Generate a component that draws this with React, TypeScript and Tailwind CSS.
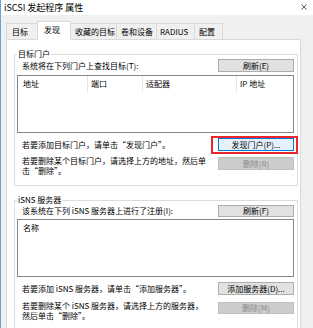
import React from "react";

const Btn = ({ children, kind = "normal", w = "w-[76px]", h = "h-[13px]" }: { children: React.ReactNode; kind?: "normal" | "focus" | "disabled"; w?: string; h?: string }) => {
  const cls =
    kind === "focus"
      ? "border-[#0078d7] bg-[#e5f1fb] text-black"
      : kind === "disabled"
      ? "border-[#bfbfbf] bg-[#cccccc] text-[#8a8a8a]"
      : "border-[#adadad] bg-[#e1e1e1] text-black";
  return (
    <div className={`${w} ${h} shrink-0 border ${cls} flex items-center justify-center text-[8px] leading-none whitespace-nowrap`}>
      {children}
    </div>
  );
};

export default function App() {
  const tabs = [
    { t: "目标", w: "w-[32px]", pl: "pl-[5px]" },
    { t: "发现", w: "w-[34px]", pl: "pl-[6px]", sel: true },
    { t: "收藏的目标", w: "w-[47px]", pl: "pl-[4px]" },
    { t: "卷和设备", w: "w-[41px]", pl: "pl-[4px]" },
    { t: "RADIUS", w: "w-[39px]", pl: "pl-[3px]" },
    { t: "配置", w: "w-[29px]", pl: "pl-[4px]" },
  ];
  return (
    <div className="w-[313px] h-[328px] overflow-hidden bg-[#f0f0f0] border-l border-[#6aa3dc] text-black font-['Noto_Sans_CJK_SC','Noto_Sans',sans-serif]">
      {/* title bar */}
      <div className="h-[15px] bg-white flex items-center justify-between pl-[3px] pr-[6px]">
        <span className="text-[9px] leading-none">iSCSI 发起程序 属性</span>
        <svg width="6" height="6" viewBox="0 0 6 6" className="mt-[-1px]">
          <path d="M0.5 0.5 L5.5 5.5 M5.5 0.5 L0.5 5.5" stroke="#333" strokeWidth="0.8" fill="none" />
        </svg>
      </div>
      {/* tabs */}
      <div className="h-[24px] flex items-end pl-[6px]">
        {tabs.map((tb, i) => (
          <div
            key={i}
            className={`${tb.w} ${tb.pl} -ml-[1px] flex items-center text-[8px] leading-none whitespace-nowrap border border-b-0 border-[#d9d9d9] ${
              tb.sel ? "h-[19px] -mb-[1px] bg-white relative z-10 pb-[2px]" : "h-[16px] bg-[#f0f0f0]"
            }`}
          >
            {tb.t}
          </div>
        ))}
      </div>
      {/* panel */}
      <div className="ml-[5px] w-[295px] h-[300px] bg-white border border-[#d9d9d9] pt-[9px] text-[8px]">
        {/* group 1 */}
        <fieldset className="ml-[7px] w-[284px] border border-[#dcdcdc] pl-[2px] pr-[3px] pb-[8px]">
          <legend className="px-[1px] leading-[10px] text-[8px]">目标门户</legend>
          <div className="h-[13px] flex items-center justify-between">
            <span className="pl-[5px] leading-none whitespace-nowrap">系统将在下列门户上查找目标(T):</span>
            <Btn>刷新(E)</Btn>
          </div>
          <div className="mt-[3px] h-[58px] border border-[#828790] bg-white">
            <div className="flex h-[16px] text-[8px]">
              <div className="w-[70px] pl-[5px] border-r border-[#e5e5e5] flex items-center">地址</div>
              <div className="w-[55px] pl-[3px] border-r border-[#e5e5e5] flex items-center">端口</div>
              <div className="w-[94px] pl-[3px] border-r border-[#e5e5e5] flex items-center">适配器</div>
              <div className="pl-[3px] flex items-center">IP 地址</div>
            </div>
          </div>
          <div className="mt-[3px] flex items-center justify-between">
            <span className="pl-[5px] leading-none whitespace-nowrap">若要添加目标门户，请单击“发现门户”。</span>
            <div className="-mr-[4px] border-2 border-[#e8262b] pl-[5px] pr-[2px] pb-[1px]">
              <Btn kind="focus">发现门户(P)...</Btn>
            </div>
          </div>
          <div className="mt-[3px] h-[20px] flex items-start justify-between">
            <span className="pl-[5px] -mt-[1px] leading-[10px] whitespace-nowrap">
              若要删除某个目标门户，请选择上方的地址，然后单
              <br />
              击“删除”。
            </span>
            <Btn kind="disabled">删除(R)</Btn>
          </div>
        </fieldset>
        {/* group 2 */}
        <fieldset className="mt-[9px] ml-[7px] w-[284px] border border-[#dcdcdc] pl-[2px] pr-[3px] pb-[10px]">
          <legend className="px-[1px] leading-[10px] text-[8px]">iSNS 服务器</legend>
          <div className="h-[12px] flex items-center justify-between">
            <span className="pl-[5px] leading-none whitespace-nowrap">该系统在下列 iSNS 服务器上进行了注册(I):</span>
            <Btn h="h-[12px]">刷新(F)</Btn>
          </div>
          <div className="mt-[2px] h-[58px] border border-[#828790] bg-white">
            <div className="flex h-[16px]">
              <div className="pl-[5px] flex items-center">名称</div>
            </div>
          </div>
          <div className="mt-[5px] flex items-center justify-between">
            <span className="pl-[5px] leading-none whitespace-nowrap">若要添加 iSNS 服务器，请单击“添加服务器”。</span>
            <Btn>添加服务器(D)...</Btn>
          </div>
          <div className="mt-[7px] h-[20px] flex items-start justify-between">
            <span className="pl-[5px] -mt-[1px] leading-[10px] whitespace-nowrap">
              若要删除某个 iSNS 服务器，请选择上方的服务器，
              <br />
              然后单击“删除”。
            </span>
            <Btn kind="disabled" h="h-[12px]">删除(M)</Btn>
          </div>
        </fieldset>
      </div>
    </div>
  );
}
